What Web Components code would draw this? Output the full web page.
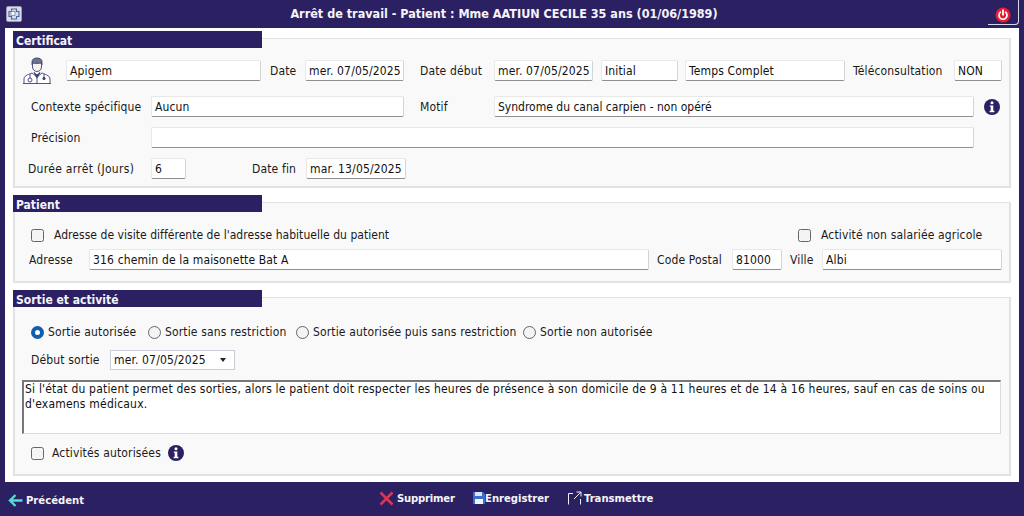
<!DOCTYPE html>
<html lang="fr">
<head>
<meta charset="utf-8">
<title>Arrêt de travail</title>
<style>
  html, body { margin: 0; padding: 0; background: #2b2162; }
  body { font: 12px "DejaVu Sans Condensed", "DejaVu Sans", sans-serif; letter-spacing: .15px; color: #1a1a1a; }
</style>
</head>
<body>
<app-shell>
  <app-header slot="header" title-text="Arrêt de travail - Patient : Mme AATIUN CECILE 35 ans (01/06/1989)"></app-header>

  <form-section heading="Certificat" style="height:150px;margin-top:10px">
    <form-row style="height:21px;margin-top:21px;padding-left:8px">
      <doctor-icon style="flex:0 0 28px"></doctor-icon>
      <text-field value="Apigem" style="flex:0 0 195px;margin-left:15px"></text-field>
      <field-label style="flex:0 0 35px;margin-left:9px">Date</field-label>
      <text-field value="mer. 07/05/2025" style="flex:0 0 99px"></text-field>
      <field-label style="flex:0 0 74px;margin-left:16px">Date début</field-label>
      <text-field value="mer. 07/05/2025" style="flex:0 0 99px"></text-field>
      <text-field value="Initial" style="flex:0 0 77px;margin-left:8px"></text-field>
      <text-field value="Temps Complet" style="flex:0 0 160px;margin-left:7px"></text-field>
      <field-label style="flex:0 0 101px;margin-left:8px">Téléconsultation</field-label>
      <text-field value="NON" style="flex:0 0 48px"></text-field>
    </form-row>
    <form-row style="height:21px;margin-top:15px;padding-left:16px">
      <field-label style="flex:0 0 120px">Contexte spécifique</field-label>
      <text-field value="Aucun" style="flex:0 0 253px"></text-field>
      <field-label style="flex:0 0 74px;margin-left:16px">Motif</field-label>
      <text-field value="Syndrome du canal carpien - non opéré" style="flex:0 0 480px;letter-spacing:0"></text-field>
      <info-icon style="margin-left:10px"></info-icon>
    </form-row>
    <form-row style="height:21px;margin-top:10px;padding-left:16px">
      <field-label style="flex:0 0 120px">Précision</field-label>
      <text-field value="" style="flex:0 0 823px"></text-field>
    </form-row>
    <form-row style="height:21px;margin-top:10px;padding-left:13px">
      <field-label style="flex:0 0 123px;letter-spacing:.3px">Durée arrêt (Jours)</field-label>
      <text-field value="6" style="flex:0 0 35px"></text-field>
      <field-label style="flex:0 0 54px;margin-left:66px">Date fin</field-label>
      <text-field value="mar. 13/05/2025" style="flex:0 0 100px"></text-field>
    </form-row>
  </form-section>

  <form-section heading="Patient" style="height:81px;margin-top:14px">
    <form-row style="height:16px;margin-top:24px;padding-left:16px">
      <check-field style="flex:0 0 767px;letter-spacing:.04px" gap="10">Adresse de visite différente de l'adresse habituelle du patient</check-field>
      <check-field gap="10">Activité non salariée agricole</check-field>
    </form-row>
    <form-row style="height:21px;margin-top:6px;padding-left:14px">
      <field-label style="flex:0 0 60px">Adresse</field-label>
      <text-field value="316 chemin de la maisonette Bat A" style="flex:0 0 560px"></text-field>
      <field-label style="flex:0 0 75px;margin-left:8px">Code Postal</field-label>
      <text-field value="81000" style="flex:0 0 50px"></text-field>
      <field-label style="flex:0 0 32px;margin-left:8px">Ville</field-label>
      <text-field value="Albi" style="flex:0 0 180px"></text-field>
    </form-row>
  </form-section>

  <form-section heading="Sortie et activité" style="height:179px;margin-top:14px">
    <form-row style="height:16px;margin-top:26px;padding-left:16px">
      <radio-field checked style="flex:0 0 117px">Sortie autorisée</radio-field>
      <radio-field style="flex:0 0 148px">Sortie sans restriction</radio-field>
      <radio-field style="flex:0 0 227px">Sortie autorisée puis sans restriction</radio-field>
      <radio-field>Sortie non autorisée</radio-field>
    </form-row>
    <form-row style="height:20px;margin-top:10px;padding-left:16px">
      <field-label style="flex:0 0 79px">Début sortie</field-label>
      <select-field value="mer. 07/05/2025" style="flex:0 0 125px"></select-field>
    </form-row>
    <form-row style="margin-top:10px;padding-left:7px">
      <note-area style="flex:0 0 979px;height:54px">Si l'état du patient permet des sorties, alors le patient doit respecter les heures de présence à son domicile de 9 à 11 heures et de 14 à 16 heures, sauf en cas de soins ou d'examens médicaux.</note-area>
    </form-row>
    <form-row style="height:18px;margin-top:10px;padding-left:16px">
      <check-field gap="8">Activités autorisées</check-field>
      <info-icon style="margin-left:7px"></info-icon>
    </form-row>
  </form-section>

  <app-footer slot="footer"></app-footer>
</app-shell>

<script>
  // petit helper pour eviter de repeter attachShadow partout
  function shadow(el, html) {
    el.attachShadow({ mode: "open" }).innerHTML = html
  }

  class AppShell extends HTMLElement {
    constructor() {
      super()
      shadow(this, `
        <style>
          :host { display: flex; flex-direction: column; width: 1024px; height: 516px; background: #2b2162; overflow: hidden; }
          .panel { box-sizing: border-box; height: 454px; margin: 0 5px; padding: 0 8px; background: #fff; display: flow-root; }
        </style>
        <slot name="header"></slot>
        <div class="panel"><slot></slot></div>
        <slot name="footer"></slot>
      `)
    }
  }

  class AppHeader extends HTMLElement {
    connectedCallback() {
      shadow(this, `
        <style>
          :host { display: flex; align-items: center; height: 28px; flex: none; color: #fff; position: relative; }
          .logo { width: 16px; height: 16px; margin-left: 6px; flex: none; }
          h1 { flex: 1; margin: -1px 2px 0 0; text-align: center; font: bold 12.5px "DejaVu Sans Condensed", "DejaVu Sans", sans-serif; letter-spacing: 0; color: #f4f4fa; }
          .power { flex: none; box-sizing: border-box; width: 31px; height: 25px; margin: 0 5px 3px 0; align-self: flex-end; border-right: 1px solid #d8d8e4; border-bottom: 1px solid #d8d8e4; border-bottom-right-radius: 4px; display: flex; align-items: center; justify-content: center; padding-top: 5px; }
        </style>
        <svg class="logo" viewBox="0 0 16 16">
          <rect x=".5" y=".5" width="15" height="15" rx="1.5" fill="#d9dbe6" stroke="#9a9ab0"/>
          <path d="M5.5 3h5v2.500h2.500v5h-2.500v2.500h-5v-2.500h-2.500v-5h2.500z" fill="none" stroke="#4a64a8" stroke-width="1.100"/>
          <rect x="5" y="5.500" width="4" height="4" fill="#fff" stroke="#6a7fb8" stroke-width=".8"/>
        </svg>
        <h1>${this.getAttribute("title-text")}</h1>
        <div class="power">
          <svg width="16" height="16" viewBox="0 0 16 16">
            <circle cx="8" cy="8" r="7.500" fill="#ea1c33"/>
            <path d="M5.400 5.200a4 4 0 1 0 5.200 0" fill="none" stroke="#fff" stroke-width="1.700" stroke-linecap="round"/>
            <path d="M8 3.200v4.600" stroke="#fff" stroke-width="1.800" stroke-linecap="round"/>
          </svg>
        </div>
      `)
    }
  }

  class FormSection extends HTMLElement {
    connectedCallback() {
      shadow(this, `
        <style>
          :host { display: block; box-sizing: border-box; width: 998px; position: relative; background: #f9f9f9; border: 2px solid #e2e2e2; border-top-width: 1px; }
          .legend { position: absolute; left: -2px; top: -8px; box-sizing: border-box; width: 249px; height: 17px; padding-left: 3px; background: #2b2162; color: #f4f4fa; font: bold 12px/20px "DejaVu Sans Condensed", "DejaVu Sans", sans-serif; letter-spacing: 0; }
        </style>
        <div class="legend">${this.getAttribute("heading")}</div>
        <slot></slot>
      `)
    }
  }

  class FormRow extends HTMLElement {
    constructor() {
      super()
      shadow(this, `
        <style>
          :host { display: flex; align-items: center; box-sizing: border-box; }
        </style>
        <slot></slot>
      `)
    }
  }

  class FieldLabel extends HTMLElement {
    constructor() {
      super()
      shadow(this, `
        <style>
          :host { display: block; box-sizing: border-box; white-space: nowrap; color: #1a1a1a; }
        </style>
        <slot></slot>
      `)
    }
  }

  class TextField extends HTMLElement {
    connectedCallback() {
      shadow(this, `
        <style>
          :host { display: block; box-sizing: border-box; height: 21px; padding: 0 3px; background: #fff; border: 1px solid #e8e8e8; border-right-color: #d4d4d4; border-bottom: 1px solid #8f8f8f; border-radius: 2px; line-height: 20px; white-space: nowrap; overflow: hidden; color: #111; }
        </style>
        ${this.getAttribute("value") || ""}
      `)
    }
  }

  class SelectField extends HTMLElement {
    connectedCallback() {
      shadow(this, `
        <style>
          :host { display: flex; align-items: center; justify-content: space-between; box-sizing: border-box; height: 20px; padding: 0 8px 0 3px; background: #fff; border: 1px solid #c8ccd4; white-space: nowrap; color: #111; }
          i { width: 0; height: 0; border: 3.500px solid transparent; border-top: 4px solid #222; border-bottom: 0; }
        </style>
        <span>${this.getAttribute("value")}</span><i></i>
      `)
    }
  }

  class NoteArea extends HTMLElement {
    constructor() {
      super()
      shadow(this, `
        <style>
          :host { display: block; box-sizing: border-box; padding: 0 0 0 1px; background: #fff; border: 1px solid #dcdcdc; border-top: 2px solid #777; border-left: 2px solid #777; line-height: 15px; letter-spacing: .2px; color: #111; }
        </style>
        <slot></slot>
      `)
    }
  }

  class CheckField extends HTMLElement {
    connectedCallback() {
      const gap = this.getAttribute("gap") || 10
      shadow(this, `
        <style>
          :host { display: flex; align-items: center; white-space: nowrap; }
          i { flex: none; box-sizing: border-box; width: 13px; height: 13px; margin-right: ${gap}px; background: #f4f4f4; border: 1px solid #666; border-radius: 2.500px; }
        </style>
        <i></i><slot></slot>
      `)
    }
  }

  class RadioField extends HTMLElement {
    connectedCallback() {
      const on = this.hasAttribute("checked")
      shadow(this, `
        <style>
          :host { display: flex; align-items: center; white-space: nowrap; }
          i { flex: none; box-sizing: border-box; width: 13px; height: 13px; margin-right: 4px; border-radius: 50%; background: #f4f4f4; border: 1px solid #666; }
          i.on { background: #fff; border: 4px solid #0f5fb0; }
        </style>
        <i class="${on ? "on" : ""}"></i><slot></slot>
      `)
    }
  }

  class InfoIcon extends HTMLElement {
    constructor() {
      super()
      shadow(this, `
        <style>
          :host { display: block; width: 16px; height: 16px; flex: none; }
          svg { display: block; }
        </style>
        <svg width="16" height="16" viewBox="0 0 16 16">
          <circle cx="8" cy="8" r="8" fill="#2b2162"/>
          <circle cx="8" cy="3.800" r="1.500" fill="#fff"/>
          <path d="M5.800 6.400h3.500v5.400h1.100v1.400h-4.800v-1.400h1.100v-4h-.9z" fill="#fff"/>
        </svg>
      `)
    }
  }

  class DoctorIcon extends HTMLElement {
    constructor() {
      super()
      shadow(this, `
        <style>
          :host { display: block; height: 27px; }
          svg { display: block; }
        </style>
        <svg width="28" height="27" viewBox="0 0 28 27" fill="none" stroke="#3a3f7a" stroke-width=".9">
          <path d="M9 8V5c0-3 2.500-4 5-4s5 1 5 4v3" fill="#6f7488"/>
          <path d="M9.500 6c1.500.5 7 .5 9 0v4c0 3-2.500 4.500-4.500 4.500S9.500 13 9.500 10z" fill="#f7f2ee"/>
          <path d="M1 26v-4c0-3 3-4 8-6l5 4 5-4c5 2 8 3 8 6v4" fill="#fff"/>
          <path d="M11 15.500l3 5.500 3-5.500-3 2.500z" fill="#3a3f7a"/>
          <path d="M14 21v5M7 17v4M21 17v3"/>
          <circle cx="7" cy="23" r="2"/>
          <circle cx="21" cy="21.500" r="1.200" fill="#3a3f7a"/>
          <path d="M0 26.500h28"/>
        </svg>
      `)
    }
  }

  class FooterAction extends HTMLElement {
    constructor() {
      super()
      shadow(this, `
        <style>
          :host { display: flex; align-items: center; white-space: nowrap; color: #f4f4fa; font: bold 11.2px "DejaVu Sans Condensed", "DejaVu Sans", sans-serif; letter-spacing: 0; }
          ::slotted(svg) { flex: none; display: block; }
        </style>
        <slot name="icon"></slot><slot></slot>
      `)
    }
  }

  class AppFooter extends HTMLElement {
    constructor() {
      super()
      shadow(this, `
        <style>
          :host { display: flex; flex: none; height: 34px; position: relative; align-items: center; }
          footer-action { flex: none; }
        </style>
        <footer-action style="margin:2px 0 0 8px;width:371px;gap:3px">
          <svg slot="icon" width="15" height="15" viewBox="0 0 15 15"><path d="M14.500 7.500H3M7.500 2L2 7.500 7.500 13" fill="none" stroke="#4fdcd2" stroke-width="2.400"/></svg>
          Précédent
        </footer-action>
        <footer-action style="margin-top:-2px;width:94px;gap:3px;letter-spacing:-.2px">
          <svg slot="icon" width="15" height="15" viewBox="0 0 15 15"><path d="M1.500 1.500l12 12M13.500 1.500l-12 12" stroke="#ec2f4b" stroke-width="2.500"/></svg>
          Supprimer
        </footer-action>
        <footer-action style="margin-top:-2px;width:95px">
          <svg slot="icon" width="12" height="12" viewBox="0 0 12 12"><path d="M0 0h10l2 2v10H0z" fill="#3a6fd0"/><rect x="2" y="0" width="7" height="4" fill="#dbe4f6"/><rect x="2" y="7" width="8" height="5" fill="#f2f4fa"/></svg>
          Enregistrer
        </footer-action>
        <footer-action style="margin-top:-2px;gap:2px">
          <svg slot="icon" width="14" height="14" viewBox="0 0 14 14" fill="none" stroke="#f0f0f6" stroke-width="1"><path d="M5 2.500H.5v11M12.500 8v5.500M6 8l7-7M8.500 1H13v4.500"/></svg>
          Transmettre
        </footer-action>
      `)
    }
  }

  customElements.define("app-shell", AppShell)
  customElements.define("app-header", AppHeader)
  customElements.define("form-section", FormSection)
  customElements.define("form-row", FormRow)
  customElements.define("field-label", FieldLabel)
  customElements.define("text-field", TextField)
  customElements.define("select-field", SelectField)
  customElements.define("note-area", NoteArea)
  customElements.define("check-field", CheckField)
  customElements.define("radio-field", RadioField)
  customElements.define("info-icon", InfoIcon)
  customElements.define("doctor-icon", DoctorIcon)
  customElements.define("footer-action", FooterAction)
  customElements.define("app-footer", AppFooter)
</script>
</body>
</html>
